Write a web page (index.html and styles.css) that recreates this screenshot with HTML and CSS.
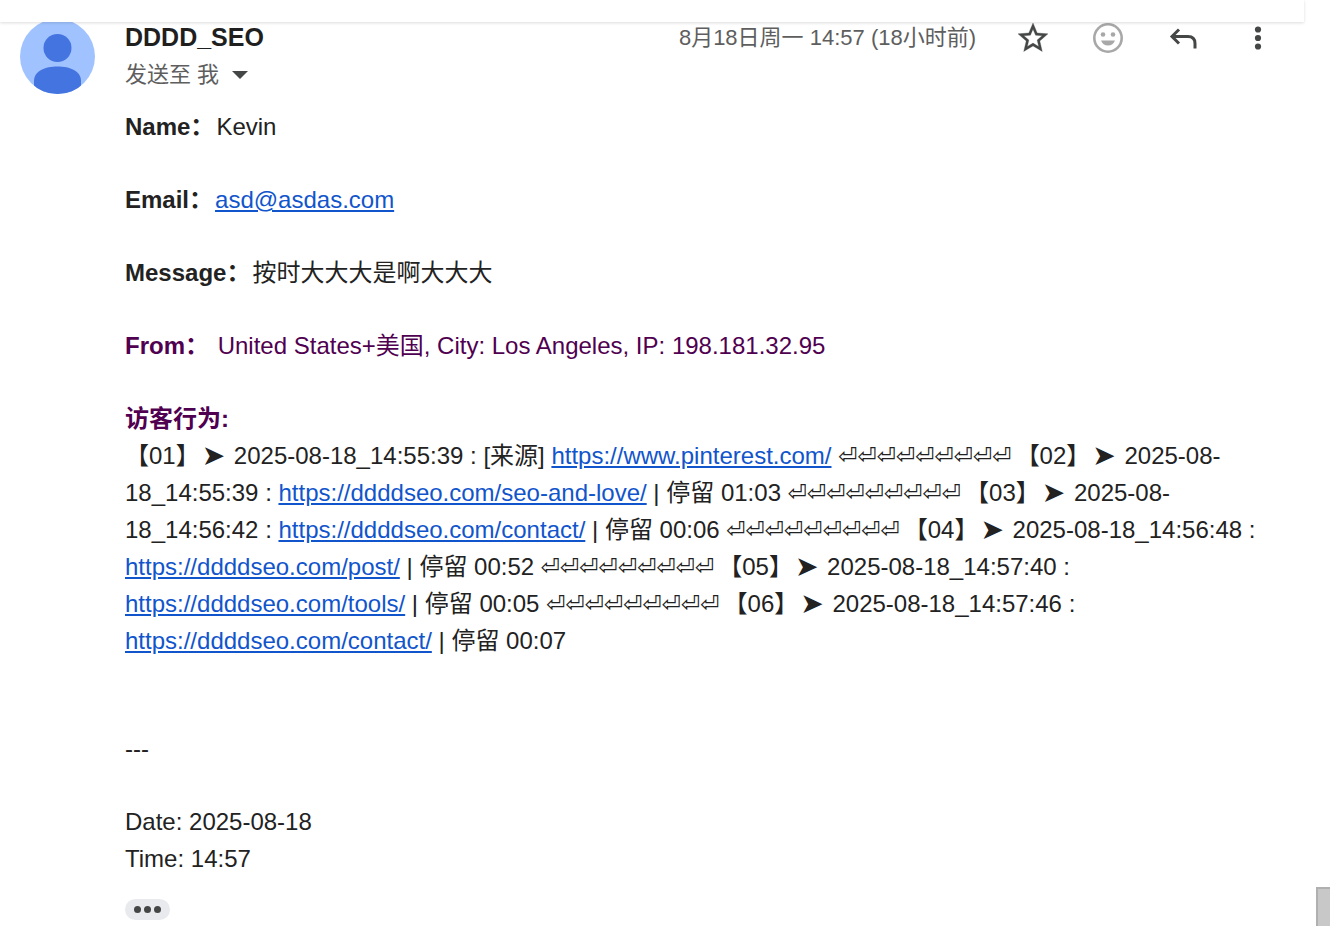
FILE: index.html
```
<!DOCTYPE html>
<html lang="zh-CN">
<head>
	<meta charset="UTF-8">
	<title>DDDD_SEO</title>
	<link rel="stylesheet" href="styles.css">
</head>
<body>
	<div class="toolbar"></div>

	<main class="mail">
		<svg class="avatar" viewBox="0 0 75 75" aria-hidden="true">
			<clipPath id="round"><circle cx="37.5" cy="37.5" r="37.5"/></clipPath>
			<g clip-path="url(#round)">
				<rect width="75" height="75" fill="#a0c3ff"/>
				<circle cx="37.5" cy="29" r="14" fill="#4374e0"/>
				<path d="M14 75V62C14 52 25 47.500 37.500 47.500S61 52 61 62V75z" fill="#4374e0"/>
			</g>
		</svg>

		<div class="content">
			<header class="head">
				<div class="sender">
					<h1>DDDD_SEO</h1>
					<button class="to" type="button">发送至 我
						<svg width="16" height="8" viewBox="0 0 16 8"><path d="M0 0h16L8 8z" fill="#444746"/></svg>
					</button>
				</div>
				<time class="date" datetime="2025-08-18T14:57">8月18日周一 14:57 (18小时前)</time>
				<div class="actions">
					<button type="button" aria-label="加星标">
						<svg width="36" height="36" viewBox="0 0 24 24"><path fill="#444746" stroke="#444746" stroke-width=".2" d="M22 9.240l-7.190-.62L12 2 9.190 8.630 2 9.240l5.460 4.730L5.820 21 12 17.270 18.180 21l-1.630-7.030L22 9.240zM12 15.400l-3.760 2.270 1-4.280-3.320-2.880 4.380-.38L12 6.100l1.710 4.040 4.380.38-3.320 2.880 1 4.280L12 15.400z"/></svg>
					</button>
					<button type="button" aria-label="添加心情回应">
						<svg width="36" height="36" viewBox="0 0 36 36" fill="#a8a8a8"><circle cx="18" cy="18" r="13.700" fill="none" stroke="#a8a8a8" stroke-width="2.600"/><circle cx="13" cy="14.500" r="2.300"/><circle cx="23" cy="14.500" r="2.300"/><path d="M11 20.500h14c-1 3-3.700 5-7 5s-6-2-7-5z"/></svg>
					</button>
					<button type="button" aria-label="回复">
						<svg width="36" height="36" viewBox="0 0 36 36" fill="none" stroke="#444746" stroke-width="3"><path d="M14 9.500L7 16.500l7 7M7 16.500h16q7 0 7 7v5"/></svg>
					</button>
					<button type="button" aria-label="更多">
						<svg width="36" height="36" viewBox="0 0 36 36" fill="#444746"><circle cx="18" cy="9.500" r="3.100"/><circle cx="18" cy="18" r="3.100"/><circle cx="18" cy="26.500" r="3.100"/></svg>
					</button>
				</div>
			</header>

			<div class="body">
				<p><b>Name：</b>Kevin</p>
				<p><b>Email：</b><a href="mailto:asd@asdas.com">asd@asdas.com</a></p>
				<p><b>Message：</b>按时大大大是啊大大大</p>
				<p class="from"><b>From：</b>&nbsp;United States+美国, City: Los Angeles, IP: 198.181.32.95</p>
				<h2>访客行为:</h2>
				<p class="log">
					【01】<span class="arrow">➤</span> 2025-08-18_14:55:39 : [来源] <a href="https://www.pinterest.com/">https://www.pinterest.com/</a> <span class="enter">⏎⏎⏎⏎⏎⏎⏎⏎⏎</span>【02】<span class="arrow">➤</span> 2025-08-18_14:55:39 : <a href="https://ddddseo.com/seo-and-love/">https://ddddseo.com/seo-and-love/</a> | 停留 01:03 <span class="enter">⏎⏎⏎⏎⏎⏎⏎⏎⏎</span>【03】<span class="arrow">➤</span> 2025-08-18_14:56:42 : <a href="https://ddddseo.com/contact/">https://ddddseo.com/contact/</a> | 停留 00:06 <span class="enter">⏎⏎⏎⏎⏎⏎⏎⏎⏎</span>【04】<span class="arrow">➤</span> 2025-08-18_14:56:48 : <a href="https://ddddseo.com/post/">https://ddddseo.com/post/</a> | 停留 00:52 <span class="enter">⏎⏎⏎⏎⏎⏎⏎⏎⏎</span>【05】<span class="arrow">➤</span> 2025-08-18_14:57:40 : <a href="https://ddddseo.com/tools/">https://ddddseo.com/tools/</a> | 停留 00:05 <span class="enter">⏎⏎⏎⏎⏎⏎⏎⏎⏎</span>【06】<span class="arrow">➤</span> 2025-08-18_14:57:46 : <a href="https://ddddseo.com/contact/">https://ddddseo.com/contact/</a> | 停留 00:07
				</p>
				<p>---</p>
				<p class="sign">Date: 2025-08-18<br>Time: 14:57</p>
			</div>

			<button class="more" type="button" aria-label="显示剪裁的内容"><i></i><i></i><i></i></button>
		</div>
	</main>

	<div class="scroll"></div>
</body>
</html>
```

FILE: styles.css
```
* { box-sizing: border-box; }

body {
	margin: 0;
	background: #fff;
	color: #222;
	font-family: "Liberation Sans", Arial, "Noto Sans CJK SC", sans-serif;
	font-size: 24px;
	line-height: 37px;
}

button {
	padding: 0;
	border: 0;
	background: none;
	font: inherit;
	cursor: pointer;
}

svg { display: block; }

/* bottom edge of the bar the mail scrolls under */
.toolbar {
	position: relative;
	z-index: 1;
	height: 22px;
	margin-right: 26px;
	background: #fff;
	box-shadow: 0 1px 3px rgba(0, 0, 0, 0.14);
}

.mail {
	display: flex;
	gap: 30px;
	margin-top: -3px;
	padding: 0 35px 0 20px;
}

.avatar {
	flex: none;
	width: 75px;
	height: 75px;
}

.content {
	flex: 1;
	min-width: 0;
}

.head {
	display: flex;
	align-items: flex-start;
	color: #5e5e5e;
	font-size: 22px;
}

.sender { flex: 1; }

.sender h1 {
	margin: 0;
	color: #1f1f1f;
	font-size: 25px;
	line-height: 37px;
}

.to {
	display: flex;
	align-items: center;
	gap: 13px;
	color: #5e5e5e;
}

.date { margin-right: 19px; }

.actions { display: flex; }

.actions button {
	display: flex;
	align-items: center;
	justify-content: center;
	width: 75px;
	height: 38px;
}

.body {
	padding: 15px 20px 0 0;
}

.body p,
.body h2 {
	margin: 0 0 36px;
}

.body h2 {
	margin: 0;
	font-size: 24px;
}

.body b { margin-right: 2px; }

.body h2,
.from {
	color: #500050;
}

.body a { color: #15c; }

.body .log { margin-bottom: 71px; }

.body .sign { margin-bottom: 22px; }

.arrow,
.enter {
	font-family: "DejaVu Sans", sans-serif;
	line-height: 1;
}

.arrow {
	margin: 0 2px;
	font-size: 28px;
	vertical-align: -1px;
}

.enter {
	margin-right: 4px;
	font-size: 23px;
}

.more {
	display: flex;
	align-items: center;
	justify-content: center;
	gap: 3px;
	width: 45px;
	height: 21px;
	border-radius: 11px;
	background: #e8eaed;
}

.more i {
	width: 7px;
	height: 7px;
	border-radius: 50%;
	background: #444746;
}

.scroll {
	position: fixed;
	right: 0;
	bottom: 0;
	width: 14px;
	height: 39px;
	border: solid #b0b0b0;
	border-width: 2px 0 0 2px;
	background: #c8c8c8;
}
```
